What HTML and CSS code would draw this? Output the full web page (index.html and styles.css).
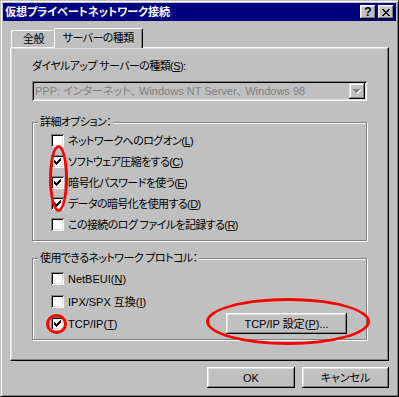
FILE: index.html
```html
<!DOCTYPE html>
<html lang="ja">
<head>
    <meta charset="UTF-8">
    <title>仮想プライベートネットワーク接続</title>
    <link rel="stylesheet" href="styles.css">
</head>
<body>
    <div class="window">
        <div class="titlebar">
            <span class="title">仮想プライベートネットワーク接続</span>
            <div class="title-btns">
                <div class="tbtn tbtn-help">?</div>
                <div class="tbtn">
                    <svg width="8" height="7" viewBox="0 0 8 7" shape-rendering="crispEdges">
                        <path fill="#000" d="M0 0h2v1h-2z M6 0h2v1h-2z M1 1h2v1h-2z M5 1h2v1h-2z M2 2h4v1h-4z M3 3h2v1h-2z M2 4h4v1h-4z M1 5h2v1h-2z M5 5h2v1h-2z M0 6h2v1h-2z M6 6h2v1h-2z"/>
                    </svg>
                </div>
            </div>
        </div>

        <div class="body">
            <div class="tabs">
                <div class="tab">全般</div>
                <div class="tab active">サーバーの種類</div>
            </div>

            <div class="panel">
                <div class="field-label">ダイヤルアップ サーバーの種類(<u>S</u>):</div>
                <div class="combo">
                    <span class="combo-text">PPP: インターネット、 Windows NT Server、 Windows 98</span>
                    <div class="combo-btn">
                        <svg width="8" height="5" viewBox="0 0 8 5" shape-rendering="crispEdges">
                            <path fill="#fff" d="M1 1h7v1h-7z M2 2h5v1h-5z M3 3h3v1h-3z M4 4h1v1h-1z"/>
                            <path fill="#808080" d="M0 0h7v1h-7z M1 1h5v1h-5z M2 2h3v1h-3z M3 3h1v1h-1z"/>
                        </svg>
                    </div>
                </div>

                <div class="group group-options">
                    <div class="legend">詳細オプション：</div>
                    <div class="rows">
                        <div class="row"><span class="check"></span><span>ネットワークへのログオン(<u>L</u>)</span></div>
                        <div class="row"><span class="check checked"></span><span>ソフトウェア圧縮をする(<u>C</u>)</span></div>
                        <div class="row"><span class="check checked"></span><span>暗号化パスワードを使う(<u>E</u>)</span></div>
                        <div class="row"><span class="check checked"></span><span>データの暗号化を使用する(<u>D</u>)</span></div>
                        <div class="row"><span class="check"></span><span>この接続のログ ファイルを記録する(<u>R</u>)</span></div>
                    </div>
                </div>

                <div class="group group-protocols">
                    <div class="legend">使用できるネットワーク プロトコル：</div>
                    <div class="rows">
                        <div class="row"><span class="check"></span><span>NetBEUI(<u>N</u>)</span></div>
                        <div class="row"><span class="check"></span><span>IPX/SPX 互換(<u>I</u>)</span></div>
                        <div class="row row-tcp">
                            <span class="row-main"><span class="check checked"></span><span>TCP/IP(<u>T</u>)</span></span>
                            <button class="btn btn-tcp">TCP/IP 設定(<u>P</u>)...</button>
                        </div>
                    </div>
                </div>
            </div>

            <div class="actions">
                <button class="btn btn-ok">OK</button>
                <button class="btn btn-cancel">キャンセル</button>
            </div>
        </div>

        <!-- red marks drawn over the dialog -->
        <div class="mark mark-checks"></div>
        <div class="mark mark-tcp-check"></div>
        <div class="mark mark-tcp-btn"></div>
    </div>
</body>
</html>
```

FILE: styles.css
```css
* {
    box-sizing: border-box;
}

body {
    margin: 0;
    background: #c0c0c0;
    color: #000;
    font-family: "Liberation Sans", "Noto Sans CJK JP", sans-serif;
    font-size: 11px;
    line-height: 14px;
    letter-spacing: -0.6px;
    font-feature-settings: "palt";
    text-autospace: no-autospace;
}

u {
    text-decoration: underline;
    text-underline-offset: 1px;
}

.window {
    position: relative;
    width: 399px;
    height: 397px;
    padding: 2px;
    display: flex;
    flex-direction: column;
    background: #c0c0c0;
    border: 1px solid;
    border-color: #c0c0c0 #000 #000 #c0c0c0;
    box-shadow: inset 1px 1px #fff, inset -1px -1px #808080;
}

/* title bar */
.titlebar {
    height: 18px;
    display: flex;
    align-items: center;
    justify-content: space-between;
    padding: 0 2px 0 2px;
    background: #000080;
    color: #fff;
}

.title {
    font-weight: bold;
    letter-spacing: 0;
    white-space: nowrap;
}

.title-btns {
    display: flex;
    gap: 2px;
}

.tbtn {
    width: 16px;
    height: 14px;
    display: flex;
    align-items: center;
    justify-content: center;
    background: #c0c0c0;
    color: #000;
    box-shadow: inset -1px -1px #000, inset 1px 1px #fff, inset -2px -2px #808080, inset 2px 2px #dfdfdf;
}

.tbtn-help {
    font-weight: bold;
    font-size: 12px;
    line-height: 12px;
    letter-spacing: 0;
}

/* tabs */
.body {
    flex: 1;
    display: flex;
    flex-direction: column;
    padding: 7px 7px 0 7px;
}

.tabs {
    height: 19px;
    display: flex;
    align-items: flex-end;
    padding-left: 1px;
    position: relative;
    z-index: 1;
}

.tab {
    height: 17px;
    padding: 1px 11px 0 11px;
    background: #c0c0c0;
    border-top: 1px solid #fff;
    border-left: 1px solid #fff;
    border-right: 1px solid #000;
    border-radius: 2px 2px 0 0;
    box-shadow: inset -1px 0 #808080;
    white-space: nowrap;
}

.tab.active {
    height: 20px;
    margin: 0 -2px -1px -2px;
    padding: 2px 8px 0 8px;
}

.panel {
    height: 314px;
    padding: 11px 21px 0 21px;
    border: 1px solid;
    border-color: #fff #000 #000 #fff;
    box-shadow: inset -1px -1px #808080, inset 1px 1px #dfdfdf;
}

.field-label {
    white-space: nowrap;
}

/* combo box, disabled */
.combo {
    height: 20px;
    margin-top: 8px;
    display: flex;
    align-items: center;
    justify-content: space-between;
    padding: 2px 2px 2px 3px;
    box-shadow: inset 1px 1px #808080, inset -1px -1px #fff, inset 2px 2px #000, inset -2px -2px #dfdfdf;
}

.combo-text {
    color: #808080;
    letter-spacing: 0;
    white-space: nowrap;
}

.combo-btn {
    width: 16px;
    height: 16px;
    display: flex;
    align-items: center;
    justify-content: center;
    box-shadow: inset -1px -1px #000, inset 1px 1px #dfdfdf, inset -2px -2px #808080, inset 2px 2px #fff;
}

/* group boxes */
.group {
    border: 1px solid #808080;
    box-shadow: inset 1px 1px #fff, 1px 1px #fff;
    padding: 0 19px 0 18px;
}

.group-options {
    margin-top: 21px;
    padding-bottom: 5px;
}

.group-protocols {
    margin-top: 17px;
    padding-bottom: 5px;
}

.legend {
    width: fit-content;
    margin: -7px 0 0 -13px;
    padding: 0 2px;
    line-height: 13px;
    background: #c0c0c0;
    white-space: nowrap;
}

.group-options .rows {
    padding-top: 1px;
}

.group-protocols .rows {
    padding-top: 2px;
}

.row {
    height: 21px;
    display: flex;
    align-items: center;
    gap: 4px;
    white-space: nowrap;
}

.group-protocols .row {
    height: 23px;
    letter-spacing: 0;
}

.group-protocols .row-tcp {
    height: 21px;
    justify-content: space-between;
}

.row-main {
    display: flex;
    align-items: center;
    gap: 4px;
}

.check {
    width: 13px;
    height: 13px;
    flex: none;
    background: #fff;
    box-shadow: inset 1px 1px #808080, inset -1px -1px #fff, inset 2px 2px #000, inset -2px -2px #dfdfdf;
}

.check.checked {
    background: #fff url("data:image/svg+xml,%3Csvg xmlns='http://www.w3.org/2000/svg' width='7' height='7' shape-rendering='crispEdges'%3E%3Cpath d='M6 0h1v1h-1z M5 1h2v1h-2z M0 2h1v1h-1z M4 2h3v1h-3z M0 3h2v1h-2z M3 3h3v1h-3z M0 4h5v1h-5z M1 5h3v1h-3z M2 6h1v1h-1z'/%3E%3C/svg%3E") no-repeat 3px 3px;
}

/* push buttons */
.btn {
    height: 21px;
    padding: 0;
    border: none;
    background: #c0c0c0;
    color: #000;
    font: inherit;
    letter-spacing: 0;
    box-shadow: inset -1px -1px #000, inset 1px 1px #fff, inset -2px -2px #808080, inset 2px 2px #dfdfdf;
}

.btn-tcp {
    width: 121px;
}

.actions {
    display: flex;
    justify-content: flex-end;
    gap: 7px;
    margin-top: 6px;
}

.btn-ok {
    width: 88px;
}

.btn-cancel {
    width: 87px;
}

/* red annotation marks */
.mark {
    position: absolute;
    border: 3px solid #f00;
    border-radius: 50%;
}

.mark-checks {
    left: 48px;
    top: 144px;
    width: 19px;
    height: 67px;
}

.mark-tcp-check {
    left: 45px;
    top: 313px;
    width: 21px;
    height: 20px;
}

.mark-tcp-btn {
    left: 205px;
    top: 297px;
    width: 164px;
    height: 47px;
}
```
